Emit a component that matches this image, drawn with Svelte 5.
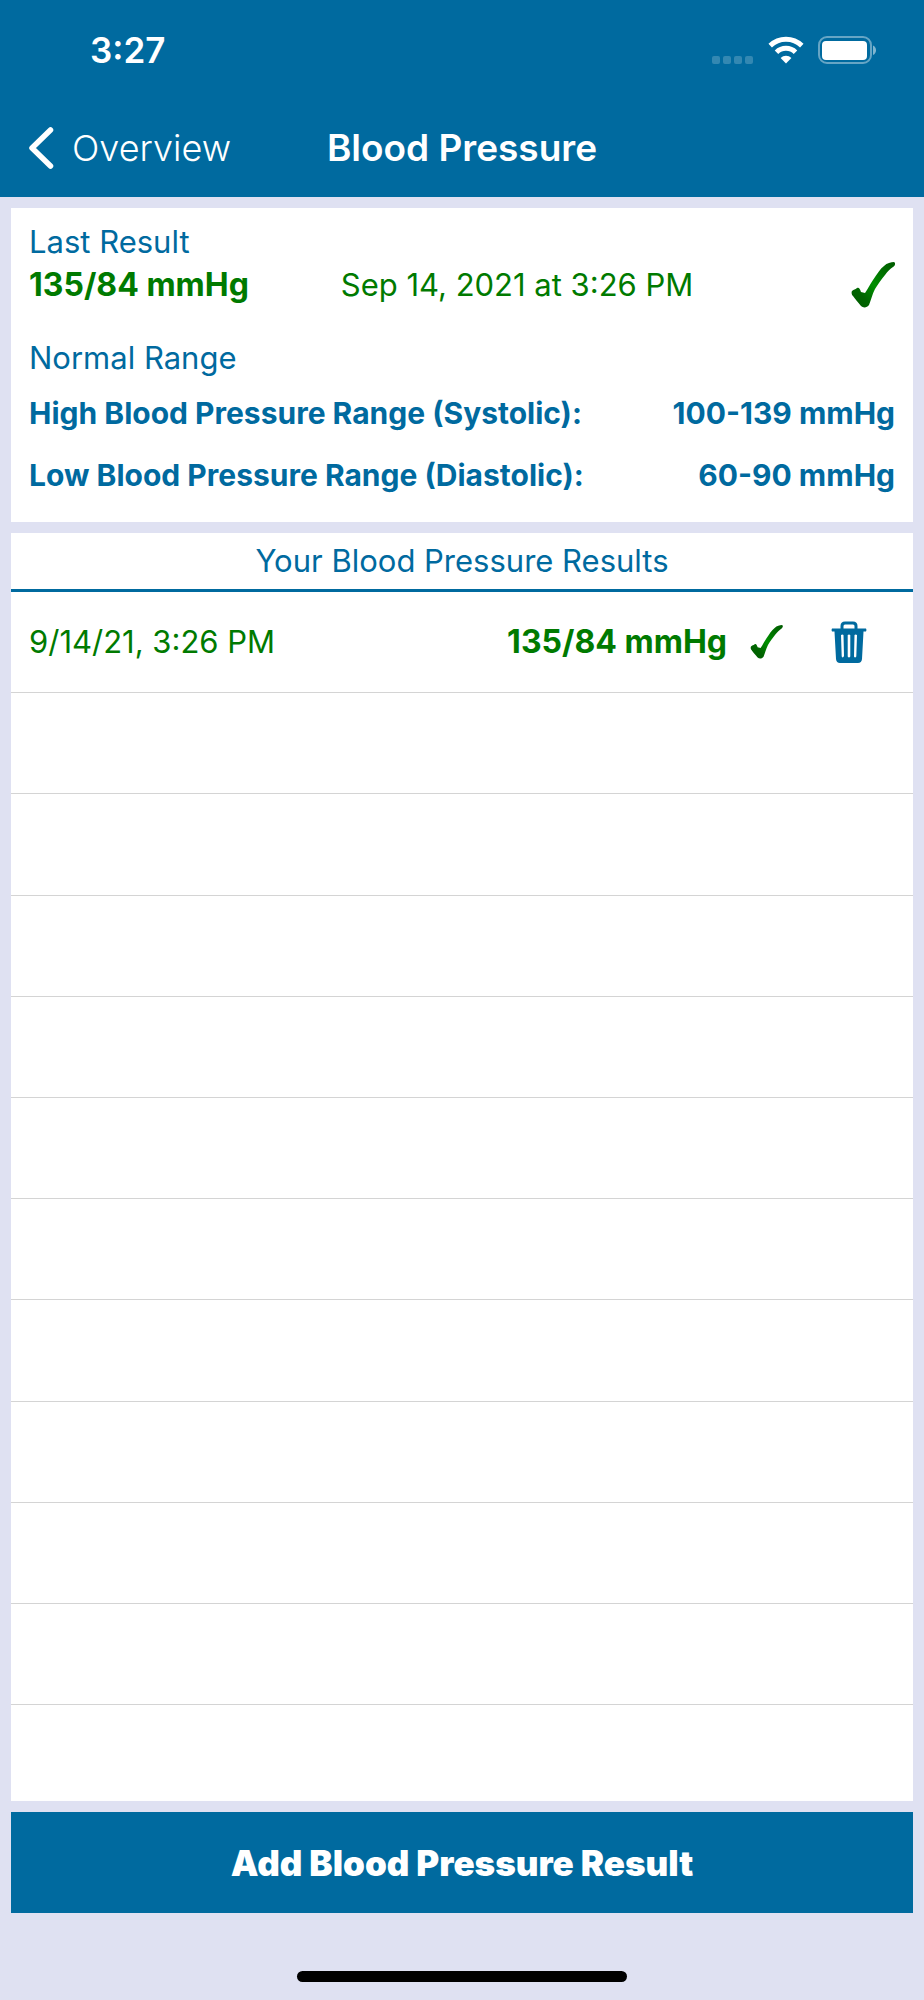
<script lang="ts">
	interface Result {
		date: string;
		value: string;
	}

	let lastResult = $state({ value: '135/84 mmHg', date: 'Sep 14, 2021 at 3:26 PM' });

	const ranges = [
		{ label: 'High Blood Pressure Range (Systolic):', value: '100-139 mmHg' },
		{ label: 'Low Blood Pressure Range (Diastolic):', value: '60-90 mmHg' },
	];

	let results: Result[] = $state([{ date: '9/14/21, 3:26 PM', value: '135/84 mmHg' }]);

	// The list always shows at least this many ruled rows
	const MIN_ROWS = 12;
	let emptyRows = $derived(Math.max(0, MIN_ROWS - results.length));

	function remove(index: number) {
		results.splice(index, 1);
	}
</script>

{#snippet check(size: 'large' | 'small')}
	<svg class="check {size}" viewBox="0 0 44 46" role="img" aria-label="In range">
		<defs>
			<linearGradient id="check-{size}" x1="0" y1="1" x2="1" y2="0">
				<stop offset="0" stop-color="#005a00" />
				<stop offset="0.25" stop-color="#006400" />
				<stop offset="0.5" stop-color="#009000" />
				<stop offset="0.75" stop-color="#007000" />
				<stop offset="1" stop-color="#005a00" />
			</linearGradient>
		</defs>
		<path
			fill="url(#check-{size})"
			d="M1 29 C3 27 4 28 6 26 C8 25 9 27 10 30 L14 31 C17 27 19 22 22 18 C26 12 29 7 33 4 C36 1 40 0 43 0 C45 1 44 4 42 5 C39 7 37 9 34 13 C30 18 27 22 24 27 C21 33 20 38 18 43 C16 46 12 46 10 44 C7 40 4 37 2 34 C1 33 0 31 1 29 Z"
		/>
	</svg>
{/snippet}

<div class="screen">
	<header>
		<div class="status-bar">
			<time>3:27</time>
			<div class="indicators">
				<svg width="42" height="28" viewBox="0 0 42 28" aria-hidden="true">
					<g fill="#fff" opacity="0.2">
						<rect x="0" y="20" width="8" height="8" rx="2" />
						<rect x="11" y="20" width="8" height="8" rx="2" />
						<rect x="22" y="20" width="8" height="8" rx="2" />
						<rect x="33" y="20" width="8" height="8" rx="2" />
					</g>
				</svg>
				<svg width="36" height="28" viewBox="0 0 36 28" aria-hidden="true">
					<g fill="none" stroke="#fff" stroke-width="5">
						<path d="M2.2 9.6 A22.8 22.8 0 0 1 33.8 9.6" />
						<path d="M8.5 16.2 A13.6 13.6 0 0 1 27.5 16.2" />
					</g>
					<path fill="#fff" d="M18 27.5 L12.6 22 A7.8 7.8 0 0 1 23.4 22 Z" />
				</svg>
				<svg width="58" height="28" viewBox="0 0 58 28" aria-hidden="true">
					<rect x="1" y="1" width="52" height="26" rx="8" fill="none" stroke="#fff" stroke-width="2" opacity="0.4" />
					<rect x="4" y="5" width="45" height="19" rx="4" fill="#fff" />
					<path fill="#fff" opacity="0.5" d="M55 9.5 C59 11 59 17.5 55 19 Z" />
				</svg>
			</div>
		</div>

		<nav>
			<a class="back" href="#overview">
				<svg width="26" height="42" viewBox="0 0 26 42" aria-hidden="true">
					<path d="M22.5 3 L4 21 L22.5 39" fill="none" stroke="#fff" stroke-width="5.5" stroke-linecap="round" stroke-linejoin="round" />
				</svg>
				Overview
			</a>
			<h1>Blood Pressure</h1>
		</nav>
	</header>

	<main>
		<section class="summary">
			<h2>Last Result</h2>
			<div class="last-result">
				<strong>{lastResult.value}</strong>
				<span>{lastResult.date}</span>
				{@render check('large')}
			</div>

			<h2>Normal Range</h2>
			<dl>
				{#each ranges as range}
					<div class="range">
						<dt>{range.label}</dt>
						<dd>{range.value}</dd>
					</div>
				{/each}
			</dl>
		</section>

		<section class="results">
			<h2>Your Blood Pressure Results</h2>
			<ul>
				{#each results as result, i}
					<li>
						<span class="date">{result.date}</span>
						<strong>{result.value}</strong>
						{@render check('small')}
						<button class="delete" aria-label="Delete result" onclick={() => remove(i)}>
							<svg width="36" height="42" viewBox="0 0 36 42" aria-hidden="true">
								<path d="M11 8 V5 Q11 2 14 2 H22 Q25 2 25 5 V8" fill="none" stroke="#006a9f" stroke-width="3" />
								<path
									fill="#006a9f"
									fill-rule="evenodd"
									d="M1 7.5 H35 Q36 9 35 10.5 H32.5 L31 38 Q30.6 42 27 42 H9 Q5.4 42 5 38 L3.5 10.5 H1 Q0 9 1 7.5 Z M10 14 Q11.5 13 12.5 14 L13 35 Q12 37.5 10.7 35.5 Z M16.7 14 Q18 13 19.3 14 V35.5 Q18 37.5 16.7 35.5 Z M23.5 14 Q24.5 13 26 14 L25.3 35.5 Q24 37.5 23 35.5 Z"
								/>
							</svg>
						</button>
					</li>
				{/each}
				{#each { length: emptyRows }}
					<li aria-hidden="true"></li>
				{/each}
			</ul>
		</section>

		<button class="add">Add Blood Pressure Result</button>
	</main>

	<footer>
		<div class="home-indicator"></div>
	</footer>
</div>

<style>
	:global(body) {
		margin: 0;
		background: #dfe1f2;
	}

	.screen {
		display: flex;
		flex-direction: column;
		min-height: 100vh;
		box-sizing: border-box;
		font-family: Inter, 'Liberation Sans', sans-serif;
		font-size: 31px;
		line-height: 40px;
		color: #006a9f;
		background: #dfe1f2;
	}

	h1,
	h2,
	ul,
	dl,
	dd {
		margin: 0;
		padding: 0;
		font-weight: 400;
		font-size: inherit;
	}

	button {
		padding: 0;
		border: none;
		font-family: inherit;
		cursor: pointer;
	}

	header {
		color: #fff;
		background: #006a9f;
	}

	.status-bar {
		display: flex;
		align-items: center;
		justify-content: space-between;
		height: 100px;
		padding: 0 48px 0 90px;
	}

	time {
		font-size: 35px;
		font-weight: 600;
	}

	.indicators {
		display: flex;
		gap: 14px;
	}

	nav {
		display: grid;
		grid-template-columns: 1fr auto 1fr;
		align-items: center;
		height: 95px;
		padding: 0 28px 2px;
	}

	.back {
		display: flex;
		align-items: center;
		gap: 18px;
		font-size: 36px;
		font-weight: 300;
		color: inherit;
		text-decoration: none;
	}

	h1 {
		font-size: 37px;
		font-weight: 600;
	}

	main {
		flex: 1;
		display: flex;
		flex-direction: column;
		gap: 11px;
		padding: 11px 11px 0;
	}

	section {
		background: #fff;
	}

	strong {
		font-size: 32px;
		font-weight: 700;
	}

	.summary {
		padding: 14px 18px 16px;
	}

	.last-result {
		position: relative;
		display: grid;
		grid-template-columns: 36% 1fr;
		align-items: center;
		height: 46px;
		margin-bottom: 30px;
		color: #007a00;
	}

	.check {
		display: block;
		flex: none;
	}

	.large {
		position: absolute;
		right: 0;
		width: 44px;
		height: 46px;
	}

	.small {
		width: 33px;
		height: 34px;
		margin: 0 48px 0 23px;
	}

	dl {
		padding-top: 4px;
	}

	.range {
		display: flex;
		align-items: center;
		justify-content: space-between;
		height: 62px;
		font-size: 30px;
	}

	dt,
	dd {
		font-weight: 700;
	}

	.results {
		flex: 1;
		display: flex;
		flex-direction: column;
	}

	.results h2 {
		padding: 8px 0;
		border-bottom: 3px solid #006a9f;
		text-align: center;
	}

	ul {
		flex: 1;
		display: flex;
		flex-direction: column;
		list-style: none;
	}

	li {
		flex: 1 0 96px;
		display: flex;
		align-items: center;
		box-sizing: border-box;
		padding: 0 46px 0 18px;
		border-bottom: 1px solid #d4d4d4;
		color: #007a00;
	}

	li:last-child {
		flex: none;
		height: 96px;
		border-bottom: none;
	}

	.date {
		flex: 1;
	}

	.delete {
		display: flex;
		background: none;
	}

	.add {
		height: 101px;
		font-size: 35px;
		font-weight: 900;
		color: #fff;
		background: #006a9f;
	}

	footer {
		display: flex;
		justify-content: center;
		align-items: flex-end;
		height: 69px;
		padding-bottom: 18px;
	}

	.home-indicator {
		width: 330px;
		height: 11px;
		border-radius: 6px;
		background: #000;
	}
</style>
